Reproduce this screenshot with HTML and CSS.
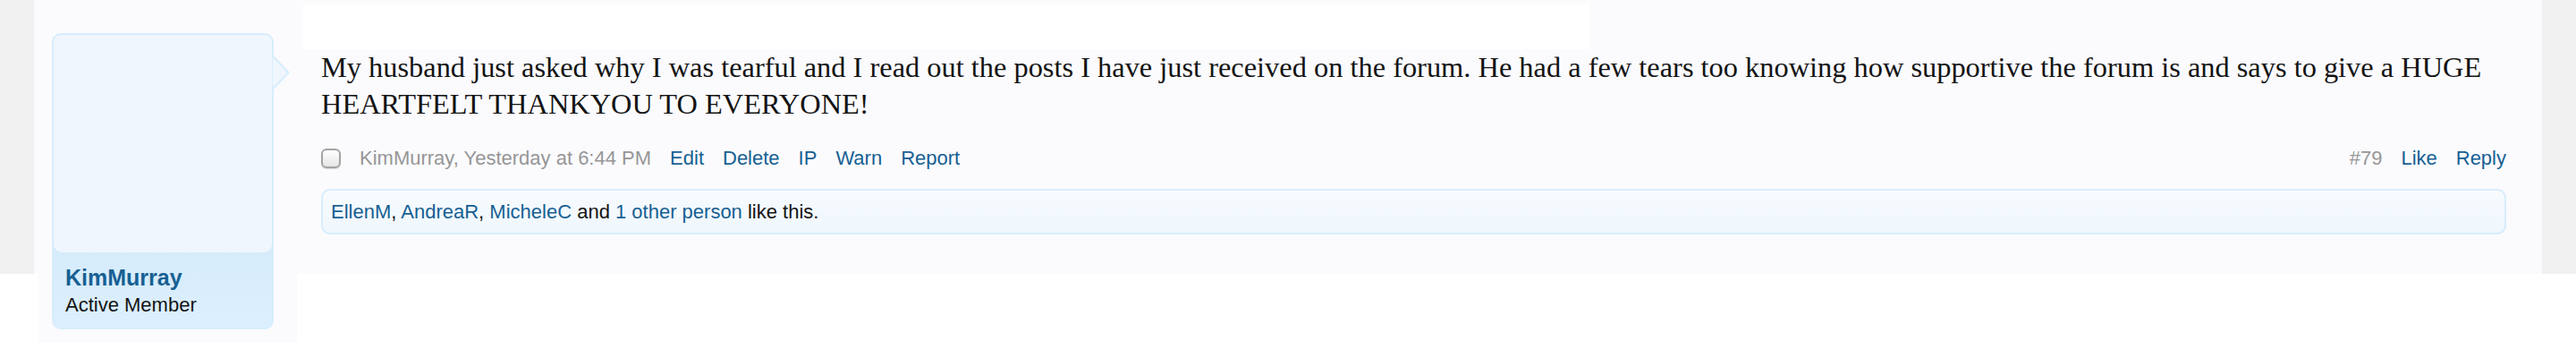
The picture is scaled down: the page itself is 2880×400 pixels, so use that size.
FILE: index.html
```html
<!DOCTYPE html>
<html>
<head>
<meta charset="utf-8">
<link rel="stylesheet" href="styles.css">
</head>
<body>
<div class="band">
  <div class="post">
    <div class="user-col">
      <div class="user-card">
        <div class="avatar"></div>
        <div class="user-text">
          <a class="username">KimMurray</a>
          <div class="user-title">Active Member</div>
        </div>
      </div>
    </div>
    <div class="message">
      <div class="top-block"></div>
      <div class="message-text">My husband just asked why I was tearful and I read out the posts I have just received on the forum. He had a few tears too knowing how supportive the forum is and says to give a HUGE HEARTFELT THANKYOU TO EVERYONE!</div>
      <div class="meta">
        <div class="meta-left">
          <span class="checkbox"></span>
          <span class="muted">KimMurray, Yesterday at 6:44 PM</span>
          <a class="link">Edit</a>
          <a class="link">Delete</a>
          <a class="link">IP</a>
          <a class="link">Warn</a>
          <a class="link">Report</a>
        </div>
        <div class="meta-right">
          <span class="muted">#79</span>
          <a class="link">Like</a>
          <a class="link">Reply</a>
        </div>
      </div>
      <div class="likes"><a class="link">EllenM</a>, <a class="link">AndreaR</a>, <a class="link">MicheleC</a> and <a class="link">1 other person</a> like this.</div>
    </div>
  </div>
</div>
</body>
</html>
```
FILE: styles.css
```css
* { box-sizing: border-box; }
html, body { margin: 0; padding: 0; background: #ffffff; }
body { font-family: "Liberation Sans", Arial, sans-serif; color: #141414; min-height: 400px; }

.band {
  background: linear-gradient(#f0f0f0, #f0f0f0) no-repeat;
  background-size: 100% 306px;
  padding: 0 38px;
}
.post {
  background: linear-gradient(#fbfbfe, #fbfbfe) no-repeat;
  background-size: 100% 306px;
  display: flex;
  align-items: flex-start;
}
.user-col {
  flex: 0 0 289px;
  margin-left: 5px;
  background: #fbfbfe;
  padding: 37px 0 15px 15px;
}
.user-card {
  position: relative;
  width: 248px;
  border: 2px solid #d7edfc;
  border-radius: 10px;
  background: linear-gradient(#d5ebfa, #d5ebfa 70%, #dcefff);
}
.user-card::before,
.user-card::after {
  content: "";
  position: absolute;
  top: 23px;
  width: 0;
  height: 0;
  border-style: solid;
  border-color: transparent;
}
.user-card::before {
  right: -20px;
  border-width: 19px 0 19px 18px;
  border-left-color: #d7edfc;
}
.user-card::after {
  right: -17px;
  top: 25px;
  border-width: 17px 0 17px 16px;
  border-left-color: #eff6fd;
}
.avatar {
  height: 243px;
  background: #eff6fd;
  border-radius: 8px 8px 9px 9px;
}
.user-text {
  padding: 13px 12px 12px 13px;
}
.username {
  display: block;
  font-size: 25px;
  line-height: 30px;
  font-weight: bold;
  color: #176093;
}
.user-title {
  margin-top: 3px;
  font-size: 22px;
  line-height: 26px;
  color: #141414;
}

.message {
  flex: 1;
  min-width: 0;
  padding: 0 40px 0 27px;
}
.top-block {
  margin: 4px 0 0 -20px;
  width: 1438px;
  height: 51px;
  background: #ffffff;
}
.message-text {
  font-family: "Liberation Serif", "Times New Roman", serif;
  font-size: 32.4px;
  line-height: 41px;
  color: #141414;
}
.meta {
  margin-top: 27px;
  display: flex;
  justify-content: space-between;
  align-items: center;
  font-size: 22px;
  line-height: 26px;
}
.meta-left, .meta-right {
  display: flex;
  align-items: center;
  gap: 21px;
}
.checkbox {
  width: 22px;
  height: 22px;
  border: 2px solid #a3a3a3;
  border-radius: 6px;
  background: linear-gradient(#ffffff, #e6e6e6);
  box-shadow: 0 1px 1px rgba(0,0,0,0.15);
}
.muted { color: #969696; }
.link { color: #176093; text-decoration: none; }

.likes {
  margin-top: 21px;
  border: 2px solid #d7edfc;
  border-radius: 10px;
  background: linear-gradient(#f7fbfe, #eff7fd);
  padding: 11px 9px 10px;
  font-size: 22px;
  line-height: 26px;
  color: #141414;
}
```
